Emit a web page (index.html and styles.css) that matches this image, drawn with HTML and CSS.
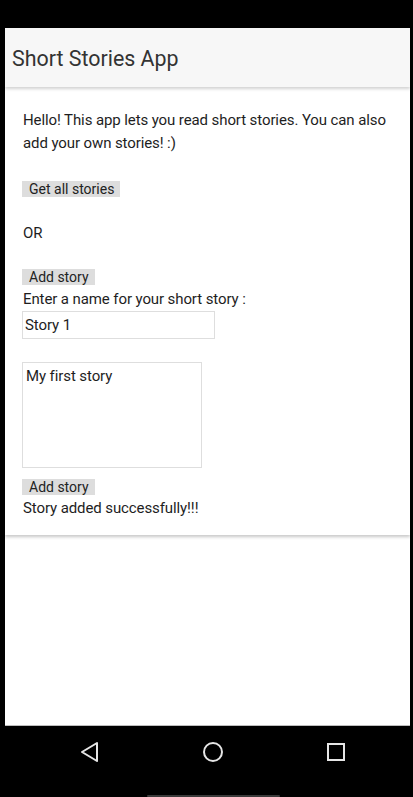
FILE: index.html
```html
<!DOCTYPE html>
<html>
<head>
<meta charset="utf-8">
<link rel="stylesheet" href="styles.css">
</head>
<body>
<div class="phone">
  <div class="statusbar"></div>
  <div class="app">
    <header class="appbar"><h1 class="title">Short Stories App</h1></header>
    <main class="card">
      <p class="intro">Hello! This app lets you read short stories. You can also add your own stories! :)</p>
      <button class="btn btn-get">Get all stories</button>
      <div class="or">OR</div>
      <button class="btn btn-add1">Add story</button>
      <label class="label">Enter a name for your short story :</label>
      <input class="name" type="text" value="Story 1">
      <textarea class="story">My first story</textarea>
      <button class="btn btn-add2">Add story</button>
      <div class="msg">Story added successfully!!!</div>
    </main>
    <div class="rest"></div>
  </div>
  <nav class="navbar">
    <svg class="nav-icon" width="20" height="22" viewBox="0 0 20 22"><path d="M17 2 L2 11 L17 20 Z" fill="none" stroke="#e6e6e6" stroke-width="2" stroke-linejoin="round"/></svg>
    <svg class="nav-icon" width="22" height="22" viewBox="0 0 22 22"><circle cx="11" cy="11" r="9" fill="none" stroke="#e6e6e6" stroke-width="2"/></svg>
    <svg class="nav-icon" width="20" height="20" viewBox="0 0 20 20"><rect x="2" y="2" width="16" height="16" fill="none" stroke="#e6e6e6" stroke-width="2"/></svg>
  </nav>
  <div class="bottom"><div class="handle"></div></div>
</div>
</body>
</html>
```
FILE: styles.css
```css
html, body {
  margin: 0;
  padding: 0;
  background: #000;
}
body {
  width: 413px;
  height: 797px;
  overflow: hidden;
  font-family: Roboto, "Liberation Sans", sans-serif;
}
.phone {
  display: flex;
  flex-direction: column;
  height: 797px;
}
.statusbar {
  height: 28px;
  flex: none;
}
.app {
  margin: 0 3px 0 5px;
  height: 698px;
  display: flex;
  flex-direction: column;
  background: #fff;
  border-bottom: 1px solid #bdbdbd;
  box-sizing: border-box;
}
.appbar {
  height: 59px;
  flex: none;
  background: #f7f7f7;
  display: flex;
  align-items: center;
  padding-left: 7px;
  padding-top: 2px;
  box-sizing: border-box;
  box-shadow: 0 2px 3px rgba(0,0,0,0.18);
  position: relative;
  z-index: 2;
}
.title {
  margin: 0;
  font-size: 21.4px;
  font-weight: 400;
  color: #333;
}
.card {
  display: flex;
  flex-direction: column;
  align-items: flex-start;
  padding: 22px 18px 15px 18px;
  background: #fff;
  box-shadow: 0 2px 3px rgba(0,0,0,0.22);
  position: relative;
  z-index: 1;
  font-size: 15px;
  letter-spacing: -0.1px;
  color: #1e1e1e;
}
.intro {
  margin: 0;
  line-height: 23px;
}
.btn {
  font-family: Roboto, "Liberation Sans", sans-serif;
  font-size: 14px;
  letter-spacing: 0;
  color: #222;
  background: #dddddd;
  border: none;
  padding: 0 6px 0 7px;
  height: 16px;
  line-height: 16px;
  margin: 0 0 0 -1px;
}
.btn-get {
  margin-top: 26px;
}
.or {
  margin-top: 25px;
  line-height: 23px;
}
.btn-add1 {
  margin-top: 24px;
}
.label {
  line-height: 23px;
  margin-top: 3px;
}
.name {
  margin: 0 0 0 -1px;
  width: 193px;
  height: 28px;
  box-sizing: border-box;
  border: 1px solid #dedede;
  font-family: Roboto, "Liberation Sans", sans-serif;
  font-size: 15px;
  letter-spacing: -0.1px;
  color: #1e1e1e;
  padding: 0 2px;
  outline: none;
}
.story {
  margin: 23px 0 0 -1px;
  width: 180px;
  height: 106px;
  box-sizing: border-box;
  border: 1px solid #dedede;
  font-family: Roboto, "Liberation Sans", sans-serif;
  font-size: 15px;
  letter-spacing: -0.1px;
  color: #1e1e1e;
  padding: 4px 3px;
  resize: none;
  outline: none;
}
.btn-add2 {
  margin-top: 11px;
}
.msg {
  margin-top: 2px;
  line-height: 23px;
}
.rest {
  flex: 1;
}
.navbar {
  height: 51px;
  flex: none;
  display: flex;
  align-items: center;
  justify-content: space-between;
  padding: 0 67px 0 80px;
}
.nav-icon {
  display: block;
}
.bottom {
  flex: 1;
  position: relative;
}
.handle {
  position: absolute;
  left: 147px;
  bottom: 0;
  width: 133px;
  height: 2px;
  background: #3a3a3a;
  border-radius: 1px;
}
```
